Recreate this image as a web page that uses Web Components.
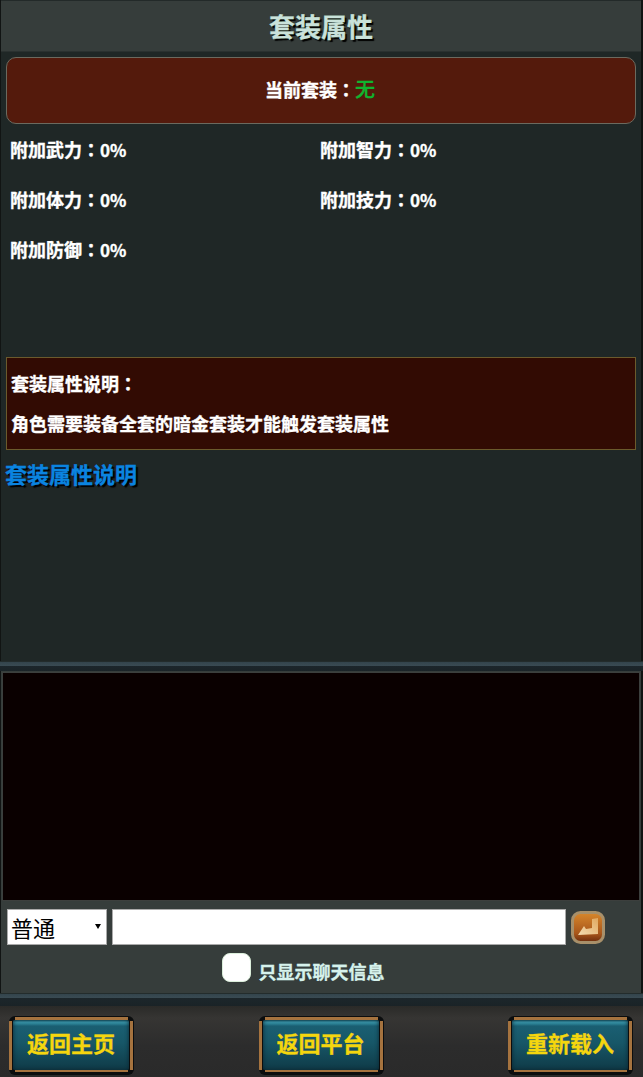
<!DOCTYPE html>
<html lang="zh">
<head>
<meta charset="utf-8">
<title>套装属性</title>
<style>
html, body { margin: 0; padding: 0; background: #111413; }
body { font-family: "Noto Sans CJK SC", sans-serif; }
</style>
</head>
<body>
<suit-page></suit-page>

<template id="bar-tpl">
<style>
:host { display: block; box-sizing: border-box; height: 52px; background: #363d3b; border-top: 1px solid #232a29; border-bottom: 1px solid #2a3130; }
div { text-align: center; font: bold 26px/49px "Noto Sans CJK SC", sans-serif; color: #c9e2da; text-shadow: 2px 2px 1px #000; -webkit-text-stroke: .3px #c9e2da; }
</style>
<div><slot></slot></div>
</template>

<template id="current-tpl">
<style>
:host { display: block; box-sizing: border-box; height: 67px; margin: 5px 5px 0; padding-right: 2px; background: #541a0c; border: 1px solid #6b6a5f; border-radius: 10px; text-align: center; font: bold 18px/62px "Noto Sans CJK SC", sans-serif; color: #fff; -webkit-text-stroke: .35px #fff; }
::slotted(b) { color: #10b52f; font-size: 20px; font-weight: 500; -webkit-text-stroke: .3px #10b52f; }
</style>
<slot></slot>
</template>

<template id="attrs-tpl">
<style>
:host { display: grid; grid-template-columns: 310px 310px; padding: 0 0 0 9px; height: 233px; align-content: start; box-sizing: border-box; grid-auto-rows: 50px; font: bold 18px/50px "Noto Sans CJK SC", sans-serif; color: #fff; -webkit-text-stroke: .35px #fff; }
</style>
<slot></slot>
</template>

<template id="note-tpl">
<style>
:host { display: block; box-sizing: border-box; height: 93px; margin: 0 5px; padding: 5px 4px; background: #320b03; border: 1px solid #6b5a2c; font: bold 18px/40px "Noto Sans CJK SC", sans-serif; color: #fff; -webkit-text-stroke: .35px #fff; }
</style>
<slot></slot>
</template>

<template id="divider-tpl">
<style>
:host { display: block; height: 10px; background: linear-gradient(#232c2c 0, #232c2c 1px, #33444c 1px, #3a4b53 5px, #1c262b 5px, #1a2327 100%); }
</style>
</template>

<template id="chat-tpl">
<style>
:host { display: block; background: #363d3b; padding: 1px 1px 0; margin: 0 2px 0 1px; box-sizing: border-box; height: 322px; }
.log { box-sizing: border-box; height: 229px; background: #0a0000; border: 1px solid #3c3f3d; }
.send { display: flex; align-items: center; gap: 5px; padding: 8px 0 0 5px; }
.pick { display: flex; position: relative; }
select { appearance: none; -webkit-appearance: none; box-sizing: border-box; width: 100px; height: 36px; font: 22px "Noto Sans CJK SC", sans-serif; background: #fff; color: #000; border: 1px solid #aaa; border-radius: 0; padding: 0 0 0 3px; margin: 0; }
.pick::after { content: ""; position: absolute; right: 6px; top: 15px; border: 3px solid transparent; border-top: 5px solid #000; border-bottom: 0; }
input[type=text] { box-sizing: border-box; width: 454px; height: 36px; background: #fff; border: 1px solid #aaa; padding: 0; margin: 0; }
svg { display: block; }
.only { display: flex; justify-content: center; align-items: flex-start; gap: 8px; margin-top: 8px; padding-right: 36px; font: bold 18px/30px "Noto Sans CJK SC", sans-serif; color: #d6f2ec; -webkit-text-stroke: .3px #d6f2ec; }
.only span:last-child { margin-top: 3px; }
.box { width: 29px; height: 29px; box-sizing: border-box; background: #fff; border: 1px solid #dcefdc; border-radius: 8px; }
</style>
<div class="log"></div>
<div class="send">
<span class="pick"><select><option>普通</option></select></span>
<input type="text">
<svg width="34" height="33" viewBox="0 0 34 33">
<defs>
<linearGradient id="o" x1="0" y1="0" x2="0" y2="1"><stop offset="0" stop-color="#d8882c"/><stop offset=".7" stop-color="#a8561a"/><stop offset="1" stop-color="#6a2a0c"/></linearGradient>
<linearGradient id="c" x1="0" y1="1" x2="1" y2="0"><stop offset="0" stop-color="#f4dcb0"/><stop offset="1" stop-color="#e0a860"/></linearGradient>
</defs>
<rect x="1.5" y="1.5" width="31" height="30" rx="8" fill="url(#o)" stroke="#a8906a" stroke-width="3"/>
<path d="M21 8 L27 7 L27 23 L7 24 L13 15 L15 18 L21 17 Z" fill="url(#c)"/>
</svg>
</div>
<div class="only"><span class="box"></span><span>只显示聊天信息</span></div>
</template>

<template id="footer-tpl">
<style>
:host { display: flex; justify-content: space-between; box-sizing: border-box; height: 71px; padding: 10px 10px 0 9px; background: linear-gradient(#2a2a28, #363533 12px, #2c2c2c 40px, #2a2a2a); }
</style>
<slot></slot>
</template>

<template id="btn-tpl">
<style>
:host { display: block; box-sizing: border-box; width: 125px; height: 59px; padding: 4px 5px 5px 4px; border-radius: 6px; background:
    linear-gradient(#a5733f, #a5733f) 6px 1px / calc(100% - 12px) 3px no-repeat,
    linear-gradient(#a5733f, #a5733f) 6px calc(100% - 3px) / calc(100% - 12px) 2px no-repeat,
    linear-gradient(#a5733f, #a5733f) 0 5px / 3px calc(100% - 10px) no-repeat,
    linear-gradient(#a5733f, #a5733f) calc(100% - 1px) 5px / 3px calc(100% - 10px) no-repeat,
    #0b0d0e; }
div { height: 100%; box-sizing: border-box; border-radius: 2px; background: linear-gradient(#1a6375 0, #3f9fb5 2px, #2b8094 4px, #1a5f72 6px, #175768 45%, #0f3a47 100%); box-shadow: inset 0 0 4px #0a2630; text-align: center; font: bold 22px/45px "Noto Sans CJK SC", sans-serif; color: #f5d60e; -webkit-text-stroke: .3px #f5d60e; }
</style>
<div><slot></slot></div>
</template>

<script>
'use strict';

function fromTemplate(id) {
    return class extends HTMLElement {
        constructor() {
            super();
            this.attachShadow({ mode: 'open' }).appendChild(document.getElementById(id).content.cloneNode(true));
        }
    };
}

customElements.define('title-bar', fromTemplate('bar-tpl'));
customElements.define('current-suit', fromTemplate('current-tpl'));
customElements.define('suit-attrs', fromTemplate('attrs-tpl'));
customElements.define('suit-note', fromTemplate('note-tpl'));
customElements.define('band-divider', fromTemplate('divider-tpl'));
customElements.define('chat-panel', fromTemplate('chat-tpl'));
customElements.define('page-footer', fromTemplate('footer-tpl'));
customElements.define('game-button', fromTemplate('btn-tpl'));

customElements.define('suit-page', class extends HTMLElement {
    connectedCallback() {
        const shadow = this.attachShadow({ mode: 'open' });
        const colon = '<span class="c" lang="zh-TW">：</span>';
        const attr = name => `<span>${name}${colon}<span class="n">0%</span></span>`;

        shadow.innerHTML = `
<style>
:host { display: block; width: 643px; height: 1077px; overflow: hidden; background: #111413; }
.main { margin: 0 2px 0 1px; height: 661px; background: #1f2726; }
.c { font-family: "Noto Sans CJK TC", sans-serif; }
.n { font-size: 17px; }
a { display: block; margin-left: 4px; padding-top: 5px; font: bold 22px/36px "Noto Sans CJK SC", sans-serif; color: #0a84e0; text-shadow: 2px 2px 1px #000; -webkit-text-stroke: .3px #0a84e0; }
band-divider.low { height: 13px; }
</style>
<div class="main">
<title-bar>套装属性</title-bar>
<current-suit>当前套装${colon}<b>无</b></current-suit>
<suit-attrs>
${attr('附加武力')}${attr('附加智力')}
${attr('附加体力')}${attr('附加技力')}
${attr('附加防御')}
</suit-attrs>
<suit-note>套装属性说明${colon}<br>角色需要装备全套的暗金套装才能触发套装属性</suit-note>
<a>套装属性说明</a>
</div>
<band-divider></band-divider>
<chat-panel></chat-panel>
<band-divider class="low"></band-divider>
<page-footer>
<game-button>返回主页</game-button>
<game-button>返回平台</game-button>
<game-button>重新载入</game-button>
</page-footer>`;
    }
});
</script>
</body>
</html>
